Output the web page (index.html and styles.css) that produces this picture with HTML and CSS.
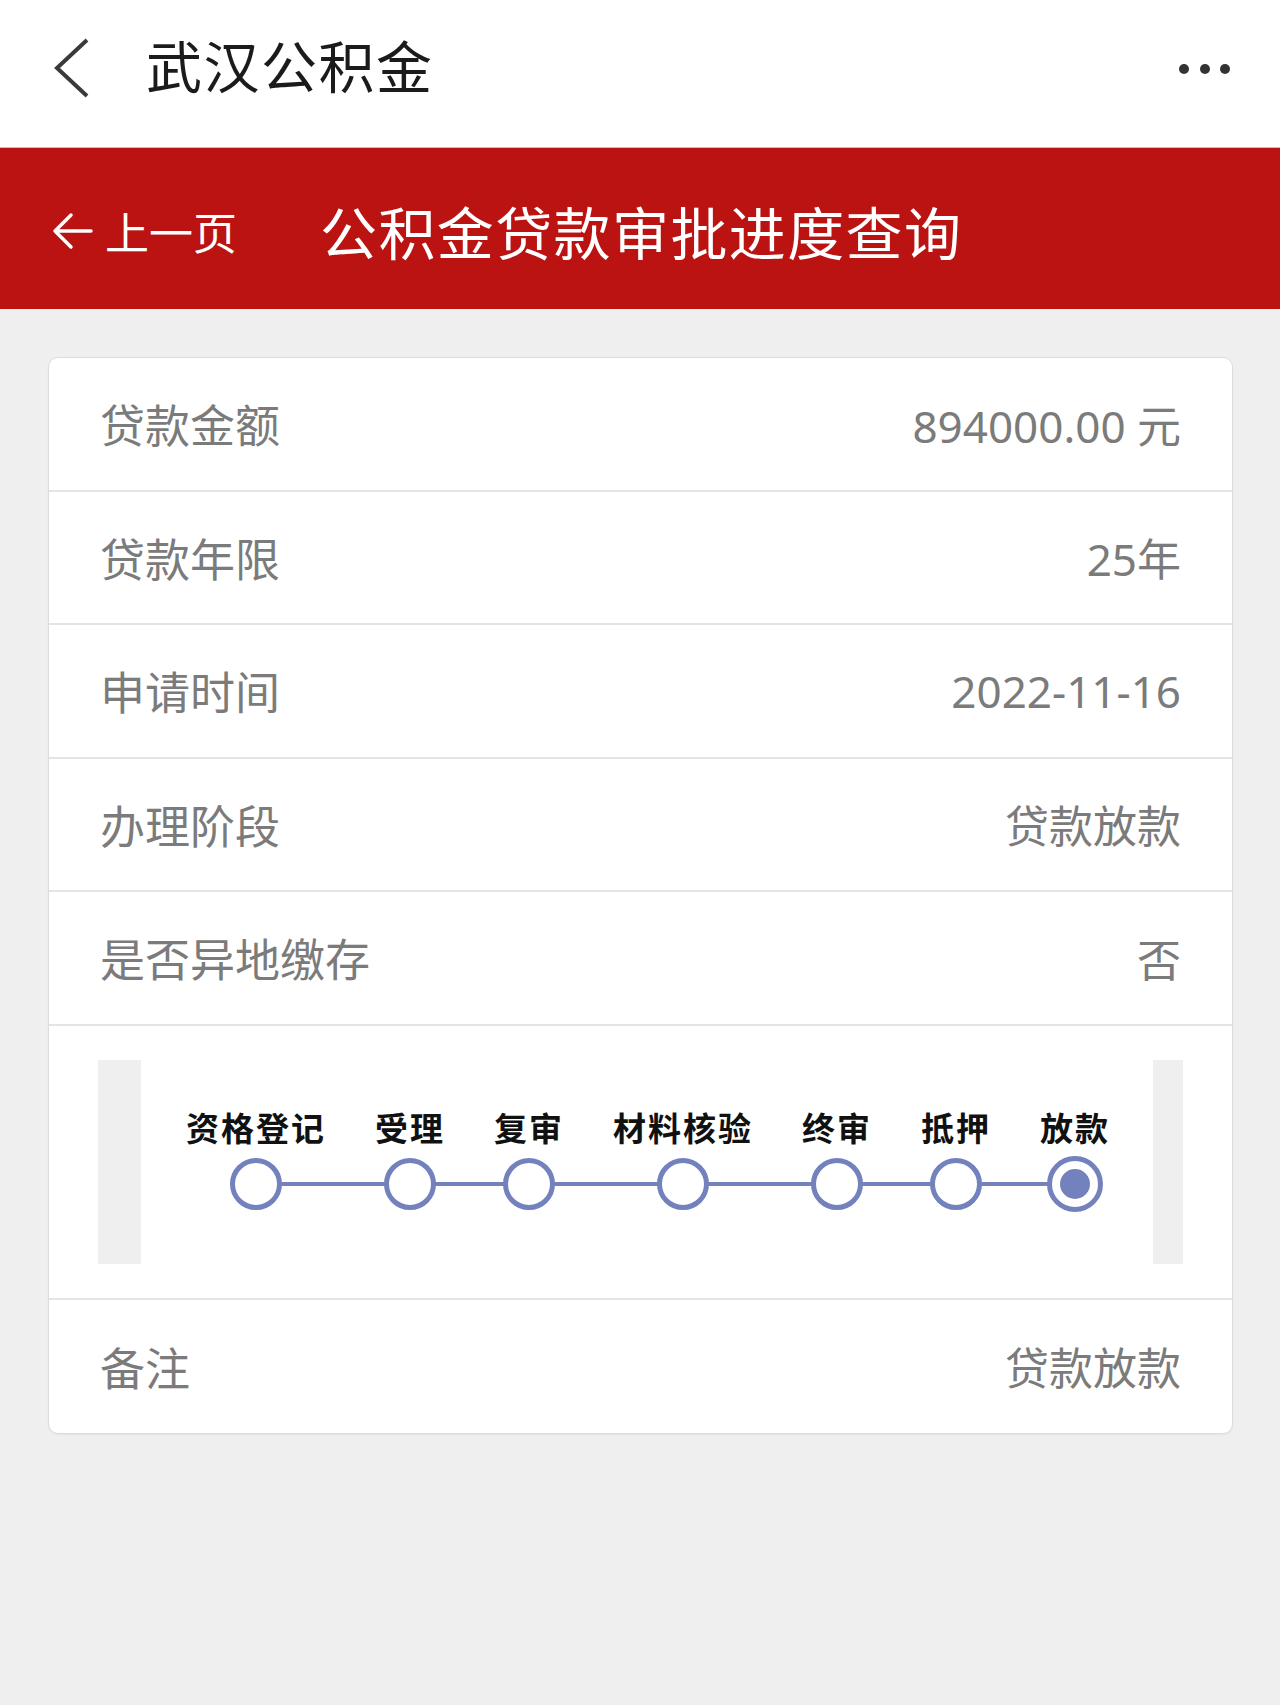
FILE: index.html
```html
<!DOCTYPE html>
<html lang="zh-CN">
<head>
    <meta charset="UTF-8">
    <meta name="viewport" content="width=device-width, initial-scale=1.0">
    <title>武汉公积金 - 公积金贷款审批进度查询</title>
    <link rel="stylesheet" href="styles.css">
</head>
<body>
    <!-- Barra superior de la app -->
    <div class="topbar">
        <svg class="back" width="38" height="62" viewBox="0 0 38 62">
            <polyline points="35,3 5,31 35,59" fill="none" stroke="#3a3a3a" stroke-width="4" stroke-linejoin="miter"/>
        </svg>
        <h1 class="app-title">武汉公积金</h1>
        <div class="more"><span></span><span></span><span></span></div>
    </div>

    <!-- Cabecera roja -->
    <div class="pagebar">
        <a class="prev">
            <svg width="42" height="42" viewBox="0 0 42 42">
                <path d="M4 21 H40 M4 21 L20 5 M4 21 L20 37" fill="none" stroke="#fff" stroke-width="3.5" stroke-linecap="round"/>
            </svg>
            上一页
        </a>
        <h2 class="page-title">公积金贷款审批进度查询</h2>
    </div>

    <div class="main">
        <div class="card">
            <div class="row">
                <span class="label">贷款金额</span>
                <span class="value">894000.00 元</span>
            </div>
            <div class="row">
                <span class="label">贷款年限</span>
                <span class="value">25年</span>
            </div>
            <div class="row">
                <span class="label">申请时间</span>
                <span class="value">2022-11-16</span>
            </div>
            <div class="row">
                <span class="label">办理阶段</span>
                <span class="value">贷款放款</span>
            </div>
            <div class="row">
                <span class="label">是否异地缴存</span>
                <span class="value">否</span>
            </div>

            <!-- Etapas del trámite -->
            <div class="stage-row">
                <div class="stage-box">
                    <div class="stage-end left"></div>
                    <div class="stage-track">
                        <div class="steps">
                            <div class="step"><div class="step-name">资格登记</div><div class="dot"></div></div>
                            <div class="step"><div class="step-name">受理</div><div class="dot"></div></div>
                            <div class="step"><div class="step-name">复审</div><div class="dot"></div></div>
                            <div class="step"><div class="step-name">材料核验</div><div class="dot"></div></div>
                            <div class="step"><div class="step-name">终审</div><div class="dot"></div></div>
                            <div class="step"><div class="step-name">抵押</div><div class="dot"></div></div>
                            <div class="step current"><div class="step-name">放款</div><div class="dot"></div></div>
                        </div>
                    </div>
                    <div class="stage-end right"></div>
                </div>
            </div>

            <div class="row last">
                <span class="label">备注</span>
                <span class="value">贷款放款</span>
            </div>
        </div>
    </div>
</body>
</html>
```

FILE: styles.css
```css
* {
    box-sizing: border-box;
}
body {
    margin: 0;
    min-height: 1705px;
    background-color: #efefef;
    font-family: "Noto Sans", "Noto Sans CJK SC", sans-serif;
}
.topbar {
    height: 147px;
    background-color: #fff;
    display: flex;
    align-items: center;
    padding: 0 50px 12px 52px;
}
.back {
    display: block;
}
.app-title {
    margin: 0 0 8px 56px;
    font-family: "Noto Sans CJK SC", sans-serif;
    font-size: 56px;
    font-weight: 400;
    letter-spacing: 1.5px;
    line-height: 1;
    color: #1b1b1b;
}
.more {
    margin-left: auto;
    margin-top: 3px;
    display: flex;
    gap: 10.5px;
}
.more span {
    width: 10px;
    height: 10px;
    border-radius: 50%;
    background-color: #333;
}
.pagebar {
    height: 162px;
    background-color: #bb1212;
    border-top: 1px solid #e4b4b4;
    display: flex;
    align-items: center;
    padding: 4px 0 0 51px;
    color: #fff;
}
.prev {
    display: flex;
    align-items: center;
    font-family: "Noto Sans CJK SC", sans-serif;
    font-size: 44px;
    line-height: 1;
    color: #fff;
    gap: 12px;
}
.prev svg {
    display: block;
}
.page-title {
    margin: 0 0 0 83px;
    font-family: "Noto Sans CJK SC", sans-serif;
    font-size: 57px;
    font-weight: 400;
    letter-spacing: 1.4px;
    line-height: 1;
}
.main {
    padding: 48px 47px 0 48px;
}
.card {
    background-color: #fff;
    border: 1px solid #dcdcdc;
    border-radius: 10px;
    box-shadow: 0 1px 2px rgba(0,0,0,0.05);
    overflow: hidden;
}
.row {
    height: 133.5px;
    display: flex;
    align-items: center;
    justify-content: space-between;
    padding: 0 51px;
    border-bottom: 2px solid #e4e4e4;
    font-size: 45px;
    color: #7b7b7b;
}
.value {
    font-size: 44px;
}
.row.last {
    border-bottom: none;
}
.stage-row {
    padding: 34px 49px 34px;
    border-bottom: 2px solid #e4e4e4;
}
.stage-box {
    display: flex;
    height: 204px;
}
.stage-end {
    background-color: #efefef;
}
.stage-end.left {
    width: 43px;
}
.stage-end.right {
    width: 30px;
}
.stage-track {
    flex: 1;
    padding: 51px 0 0 45px;
}
.steps {
    position: relative;
    display: flex;
    gap: 49px;
    width: max-content;
}
/* linea que une los circulos */
.steps::before {
    content: "";
    position: absolute;
    top: 71px;
    left: 70px;
    right: 35px;
    height: 4px;
    background-color: #7382bd;
}
.step {
    position: relative;
    display: flex;
    flex-direction: column;
    align-items: center;
}
.step-name {
    font-family: "Noto Sans CJK SC", sans-serif;
    font-size: 33px;
    font-weight: 700;
    letter-spacing: 2px;
    line-height: 33px;
    color: #111;
}
.dot {
    width: 52px;
    height: 52px;
    margin-top: 14px;
    border: 5px solid #7382bd;
    border-radius: 50%;
    background-color: #fff;
}
.step.current .dot {
    width: 56px;
    height: 56px;
    margin-top: 12px;
    display: flex;
    align-items: center;
    justify-content: center;
}
.step.current .dot::after {
    content: "";
    width: 30px;
    height: 30px;
    border-radius: 50%;
    background-color: #7382bd;
}
```
